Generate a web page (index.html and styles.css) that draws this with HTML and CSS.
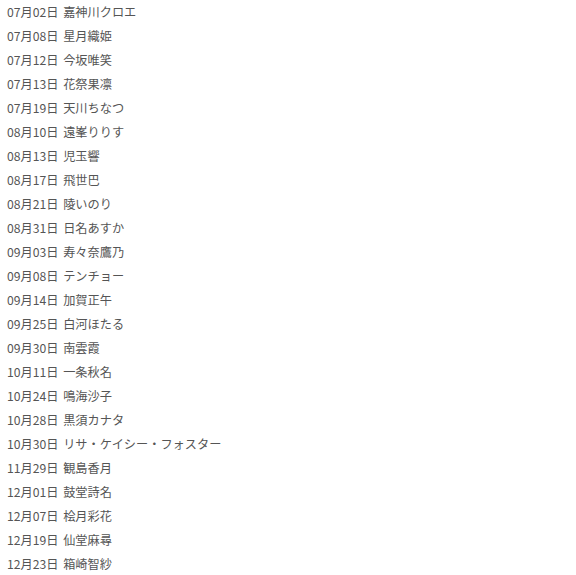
FILE: index.html
```html
<!DOCTYPE html>
<html lang="ja">
<head>
<meta charset="utf-8">
<link rel="stylesheet" href="styles.css">
</head>
<body>
<ul class="list">
<li>07月02日 嘉神川クロエ</li>
<li>07月08日 星月織姫</li>
<li>07月12日 今坂唯笑</li>
<li>07月13日 花祭果凛</li>
<li>07月19日 天川ちなつ</li>
<li>08月10日 遠峯りりす</li>
<li>08月13日 児玉響</li>
<li>08月17日 飛世巴</li>
<li>08月21日 陵いのり</li>
<li>08月31日 日名あすか</li>
<li>09月03日 寿々奈鷹乃</li>
<li>09月08日 テンチョー</li>
<li>09月14日 加賀正午</li>
<li>09月25日 白河ほたる</li>
<li>09月30日 南雲霞</li>
<li>10月11日 一条秋名</li>
<li>10月24日 鳴海沙子</li>
<li>10月28日 黒須カナタ</li>
<li>10月30日 リサ・ケイシー・フォスター</li>
<li>11月29日 観島香月</li>
<li>12月01日 鼓堂詩名</li>
<li>12月07日 桧月彩花</li>
<li>12月19日 仙堂麻尋</li>
<li>12月23日 箱崎智紗</li>
</ul>
</body>
</html>
```
FILE: styles.css
```css
html, body {
  margin: 0;
  padding: 0;
  background: #fff;
}
.list {
  list-style: none;
  margin: 0;
  padding: 0 0 0 7px;
  font-family: "Noto Sans CJK JP", sans-serif;
  font-size: 12.2px;
  line-height: 24px;
  color: #555;
}
.list li {
  word-spacing: 2px;
}
```
